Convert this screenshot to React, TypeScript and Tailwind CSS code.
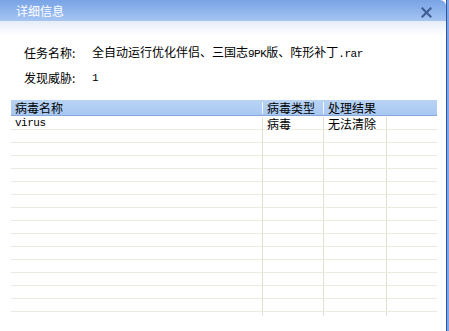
import React from "react";

const cjk = { fontFamily: '"Noto Sans CJK SC", "Liberation Sans", sans-serif' };
const mono = { fontFamily: '"Liberation Mono", "Noto Sans CJK SC", monospace' };

const cols = ["w-[251px]", "w-[61px]", "w-[63px]", "flex-1"];

function Latin({ children }: { children: React.ReactNode }) {
  return (
    <span style={mono} className="text-[11px] tracking-[-0.5px]">
      {children}
    </span>
  );
}

function Row({ cells }: { cells?: React.ReactNode[] }) {
  return (
    <div className="flex h-[13px] border-b border-[#ecebe0]">
      {cols.map((c, i) => (
        <div
          key={i}
          className={`${c} ${i > 0 ? "border-l border-[#e2e0d2]" : ""} pl-[4px] pt-px flex items-center text-[12px] leading-none text-black whitespace-nowrap`}
        >
          {cells?.[i]}
        </div>
      ))}
    </div>
  );
}

export default function App() {
  const empty = Array.from({ length: 14 });
  return (
    <div style={cjk} className="w-[449px] h-[331px] flex bg-white overflow-hidden">
      <div className="w-[446px] h-full flex flex-col">
        {/* title bar */}
        <div className="h-[21px] shrink-0 flex items-center justify-between pl-[16px] pr-[14px] bg-gradient-to-b from-[#78a3e6] to-[#a6c5f2] rounded-tr-[6px]">
          <span className="text-white text-[12px] leading-none">详细信息</span>
          <svg width="11" height="11" viewBox="0 0 11 11" className="mt-[3px]">
            <path d="M1.5 1.5 L9.5 9.5 M9.5 1.5 L1.5 9.5" stroke="#3f5f96" strokeWidth="2.2" strokeLinecap="square" />
          </svg>
        </div>

        {/* body */}
        <div className="flex-1 flex flex-col bg-gradient-to-b from-[#e6edf8] via-white to-white bg-[length:100%_30px] bg-no-repeat">
          <div className="pl-[24px] pt-[26px] text-[12px] leading-none text-black">
            <div className="flex h-[12px] items-center">
              <span className="w-[68px]">任务名称:</span>
              <span>
                全自动运行优化伴侣、三国志<Latin>9PK</Latin>版、阵形补丁<Latin>.rar</Latin>
              </span>
            </div>
            <div className="flex h-[12px] items-center mt-[13px]">
              <span className="w-[68px]">发现威胁:</span>
              <Latin>1</Latin>
            </div>
          </div>

          {/* table */}
          <div className="mt-[16px] ml-[11px] w-[426px] flex flex-col">
            <div className="flex h-[16px] items-center bg-gradient-to-b from-[#b9d3f5] to-[#a8c8f2] border-b border-[#86a9dc] text-[12px] leading-none text-black">
              <div className="w-[251px] pl-[4px]">病毒名称</div>
              <div className="w-[61px] pl-[4px] border-l border-[#f2f6fc]">病毒类型</div>
              <div className="w-[63px] pl-[4px] border-l border-[#f2f6fc]">处理结果</div>
              <div className="flex-1" />
            </div>
            <div className="h-px" />
            <Row cells={[<Latin key="v">virus</Latin>, "病毒", "无法清除"]} />
            {empty.map((_, i) => (
              <Row key={i} />
            ))}
            <div className="flex h-[4px]">
              {cols.map((c, i) => (
                <div key={i} className={`${c} ${i > 0 ? "border-l border-[#e2e0d2]" : ""}`} />
              ))}
            </div>
          </div>
        </div>
      </div>
      {/* window right edge */}
      <div className="w-[3px] h-full flex">
        <div className="w-px bg-[#2a57a8]" />
        <div className="flex-1 bg-[#7ea6e4]" />
      </div>
    </div>
  );
}
